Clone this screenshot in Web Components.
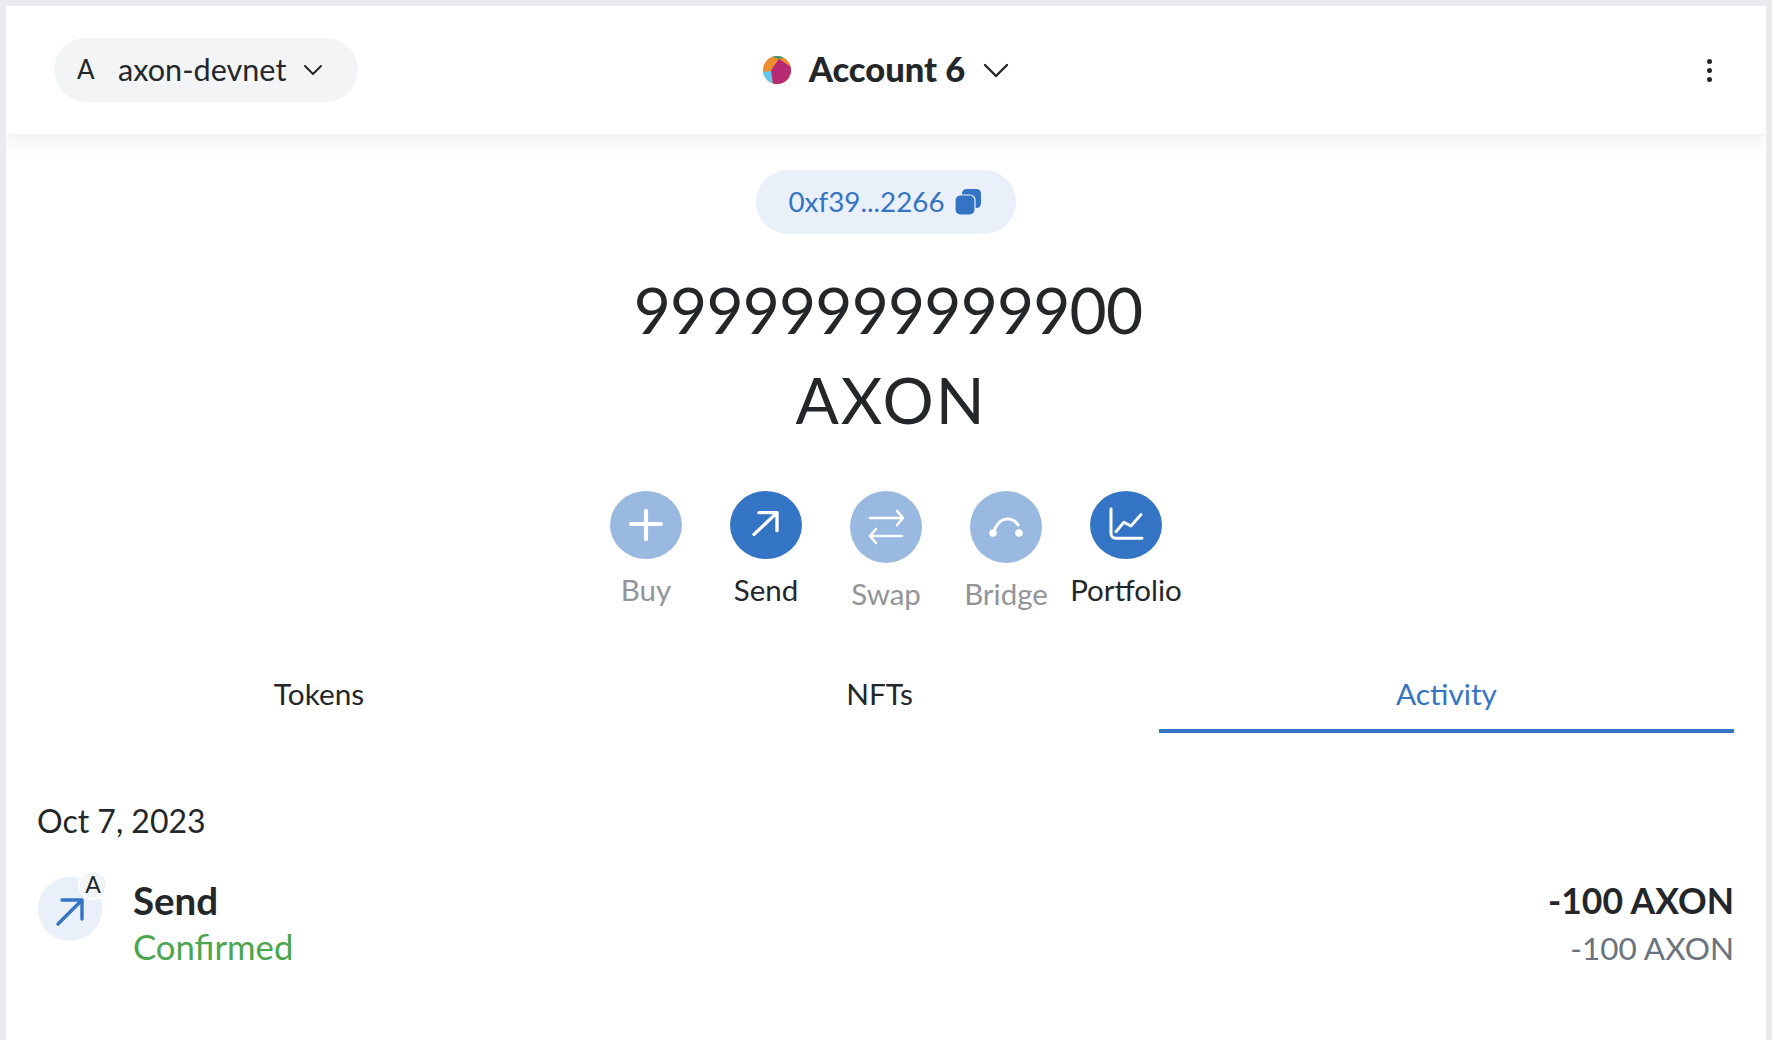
<!DOCTYPE html>
<html>
<head>
<meta charset="utf-8">
<title>axon-devnet</title>
<style>
  html, body {
    margin: 0;
    height: 100%;
    overflow: hidden;
  }
  body {
    background: #e9ebee;
    color: #24272a;
    font-family: Lato, "Liberation Sans", sans-serif;
  }
</style>
</head>
<body>
<wallet-page>
  <wallet-header slot="header"></wallet-header>
  <address-pill>0xf39...2266</address-pill>
  <token-balance amount="99999999999900" unit="AXON"></token-balance>
  <action-row>
    <action-button icon="plus" disabled short>Buy</action-button>
    <action-button icon="send" short>Send</action-button>
    <action-button icon="swap" disabled>Swap</action-button>
    <action-button icon="bridge" disabled>Bridge</action-button>
    <action-button icon="chart" short>Portfolio</action-button>
  </action-row>
  <tab-bar>
    <tab-item>Tokens</tab-item>
    <tab-item>NFTs</tab-item>
    <tab-item active>Activity</tab-item>
  </tab-bar>
  <activity-list date="Oct 7, 2023">
    <activity-item title="Send" status="Confirmed" primary="-100 AXON" secondary="-100 AXON"></activity-item>
  </activity-list>
</wallet-page>

<script>
const ICONS = {
  plus: '<path d="M36 21v30M21 35h30" stroke="#fff" stroke-width="4.2" stroke-linecap="round" fill="none"/>',
  send: '<path d="M24 46 L46 24 M29 23h18v19" stroke="#fff" stroke-width="3.4" stroke-linecap="round" stroke-linejoin="round" fill="none"/>',
  swap: '<path d="M20 27h33M47 20l6 7-6 7M52 45H20M26 38l-6 7 6 7" stroke="#fff" stroke-width="2.6" stroke-linecap="round" stroke-linejoin="round" fill="none"/>',
  bridge: '<path d="M25 38c3-7 7-10 12-10s9 2 11 6" stroke="#fff" stroke-width="3" stroke-linecap="round" fill="none"/><circle cx="23" cy="42" r="3.8" fill="#fff"/><circle cx="49" cy="42" r="3.8" fill="#fff"/>',
  chart: '<path d="M21 19v26c0 3 2 5 5 5h26" stroke="#fff" stroke-width="3" stroke-linecap="round" fill="none"/><path d="M26 43l8-10 7 4 10-12" stroke="#fff" stroke-width="3" stroke-linecap="round" stroke-linejoin="round" fill="none"/>'
};

class WalletPage extends HTMLElement {
  constructor() {
    super();
    this.attachShadow({mode: 'open'});
    this.shadowRoot.innerHTML = `
      <style>
        :host {
          display: block;
          margin: 6px 6px 0;
          height: 1034px;
          background: #fff;
          overflow: hidden;
        }
        main {
          display: flex;
          flex-direction: column;
          align-items: center;
          padding-top: 36px;
        }
      </style>
      <slot name="header"></slot>
      <main><slot></slot></main>
    `;
  }
}

class WalletHeader extends HTMLElement {
  constructor() {
    super();
    this.attachShadow({mode: 'open'});
    this.shadowRoot.innerHTML = `
      <style>
        :host {
          display: grid;
          grid-template-columns: 1fr auto 1fr;
          align-items: center;
          height: 128px;
          padding: 0 48px;
          box-sizing: border-box;
          background: #fff;
          box-shadow: 0 4px 24px rgba(0,0,0,.09);
          position: relative;
        }
        .net {
          justify-self: start;
          display: flex;
          align-items: center;
          width: 304px;
          height: 64px;
          box-sizing: border-box;
          padding-left: 23px;
          border-radius: 32px;
          background: #f2f4f6;
          font-size: 30.6px;
        }
        .net span { position: relative; top: -1px; }
        .net .letter { width: 41px; font-size: 26px; }
        .net svg { margin-left: 17px; }
        .acct {
          display: flex;
          align-items: center;
          font-size: 34.5px;
          font-weight: 900;
        }
        .acct span { position: relative; top: -2px; }
        .acct svg.ava { margin-right: 18px; }
        .acct svg.car { margin-left: 18px; }
        .dots {
          justify-self: end;
          display: flex;
          flex-direction: column;
          gap: 4px;
          margin-right: 6px;
        }
        .dots i {
          width: 5px;
          height: 5px;
          border-radius: 50%;
          background: #24272a;
        }
      </style>
      <div class="net">
        <span class="letter">A</span><span>axon-devnet</span>
        <svg width="20" height="12" viewBox="0 0 20 12"><path d="M2 2l8 8 8-8" stroke="#24272a" stroke-width="2" stroke-linecap="round" stroke-linejoin="round" fill="none"/></svg>
      </div>
      <div class="acct">
        <svg class="ava" width="28" height="28" viewBox="0 0 28 28">
          <clipPath id="c"><circle cx="14" cy="14" r="14"/></clipPath>
          <g clip-path="url(#c)">
            <rect width="28" height="28" fill="#ed8f30"/>
            <path d="M8 0h16l-8 3z" fill="#2e9b79"/>
            <path d="M0 16l8-1 2 13H0z" fill="#5fc8ef"/>
            <path d="M8 14 16 3l12 8v17H10z" fill="#b92a75"/>
          </g>
        </svg>
        <span>Account 6</span>
        <svg class="car" width="26" height="16" viewBox="0 0 26 16"><path d="M2 3l11 11L24 3" stroke="#24272a" stroke-width="2.4" stroke-linecap="round" stroke-linejoin="round" fill="none"/></svg>
      </div>
      <div class="dots"><i></i><i></i><i></i></div>
    `;
  }
}

class AddressPill extends HTMLElement {
  constructor() {
    super();
    this.attachShadow({mode: 'open'});
    this.shadowRoot.innerHTML = `
      <style>
        :host {
          display: flex;
          align-items: center;
          justify-content: center;
          gap: 10px;
          width: 260px;
          height: 64px;
          border-radius: 32px;
          background: #e9f0f9;
          color: #3474c4;
          font-size: 27.8px;
        }
        span { position: relative; top: -1px; }
        svg { margin-right: 3px; }
      </style>
      <span><slot></slot></span>
      <svg width="26" height="26" viewBox="0 0 26 26">
        <rect x="7" y="0" width="19" height="19" rx="4.5" fill="#3474c4"/>
        <rect x="0" y="6" width="20" height="20" rx="5" fill="#3474c4" stroke="#e9f0f9" stroke-width="1.2"/>
      </svg>
    `;
  }
}

class TokenBalance extends HTMLElement {
  constructor() {
    super();
    this.attachShadow({mode: 'open'});
    this.shadowRoot.innerHTML = `
      <style>
        :host {
          display: block;
          text-align: center;
          font-size: 64px;
          line-height: 90px;
          margin: 31px 0 46px;
        }
        div { white-space: nowrap; }
        .amount { letter-spacing: -0.8px; margin-left: 4px; }
        .unit { letter-spacing: 2px; margin-left: 10px; }
      </style>
      <div class="amount">${this.getAttribute('amount')}</div>
      <div class="unit">${this.getAttribute('unit')}</div>
    `;
  }
}

class ActionRow extends HTMLElement {
  constructor() {
    super();
    this.attachShadow({mode: 'open'});
    this.shadowRoot.innerHTML = `
      <style>
        :host {
          display: flex;
          gap: 48px;
          height: 173px;
          align-items: flex-start;
        }
      </style>
      <slot></slot>
    `;
  }
}

class ActionButton extends HTMLElement {
  constructor() {
    super();
    this.attachShadow({mode: 'open'});
    let icon = this.getAttribute('icon');
    this.shadowRoot.innerHTML = `
      <style>
        :host {
          display: flex;
          flex-direction: column;
          align-items: center;
          width: 72px;
          font-size: 29.5px;
          color: #24272a;
        }
        :host([disabled]) { color: #92949a; }
        .circle {
          width: 72px;
          height: 72px;
          border-radius: 50%;
          background: #3474c4;
          display: block;
          flex: none;
        }
        :host([disabled]) .circle { background: #99b9e1; }
        :host([short]) .circle { height: 68px; }
        .label {
          margin-top: 14px;
          white-space: nowrap;
          line-height: 34px;
        }
      </style>
      <svg class="circle" viewBox="0 0 72 72" preserveAspectRatio="none">${ICONS[icon]}</svg>
      <span class="label"><slot></slot></span>
    `;
  }
}

class TabBar extends HTMLElement {
  constructor() {
    super();
    this.attachShadow({mode: 'open'});
    this.shadowRoot.innerHTML = `
      <style>
        :host {
          display: grid;
          grid-template-columns: 562fr 559fr 575fr;
          align-self: stretch;
          margin: 0 32px;
        }
      </style>
      <slot></slot>
    `;
  }
}

class TabItem extends HTMLElement {
  constructor() {
    super();
    this.attachShadow({mode: 'open'});
    this.shadowRoot.innerHTML = `
      <style>
        :host {
          display: block;
          height: 69px;
          line-height: 60px;
          text-align: center;
          font-size: 29.8px;
          box-sizing: border-box;
          color: #24272a;
        }
        :host([active]) {
          color: #3474c4;
          border-bottom: 4px solid #3474c4;
        }
      </style>
      <slot></slot>
    `;
  }
}

class ActivityList extends HTMLElement {
  constructor() {
    super();
    this.attachShadow({mode: 'open'});
    this.shadowRoot.innerHTML = `
      <style>
        :host {
          display: block;
          align-self: stretch;
          padding: 0 32px;
        }
        .date {
          font-size: 32px;
          line-height: 40px;
          margin: 68px 0 36px -1px;
        }
      </style>
      <div class="date">${this.getAttribute('date')}</div>
      <slot></slot>
    `;
  }
}

class ActivityItem extends HTMLElement {
  constructor() {
    super();
    this.attachShadow({mode: 'open'});
    this.shadowRoot.innerHTML = `
      <style>
        :host {
          display: flex;
          align-items: flex-start;
        }
        .icon {
          position: relative;
          width: 64px;
          height: 64px;
          border-radius: 50%;
          background: #e9f0f9;
          flex: none;
          margin-right: 31px;
        }
        .icon svg { display: block; }
        .badge {
          position: absolute;
          top: -7px;
          right: -6px;
          width: 30px;
          height: 30px;
          border-radius: 50%;
          background: #f2f4f6;
          border: 2px solid #fff;
          box-sizing: border-box;
          text-align: center;
          font-size: 23px;
          line-height: 24px;
        }
        .grow { flex: 1; }
        .title { font-size: 38.5px; font-weight: 700; line-height: 46px; }
        .status { font-size: 34.7px; color: #4da54f; line-height: 48px; }
        .right { text-align: right; }
        .primary { font-size: 35.5px; font-weight: 700; line-height: 48px; }
        .secondary { font-size: 31.5px; color: #6a737d; line-height: 46px; }
      </style>
      <div class="icon">
        <svg width="64" height="64" viewBox="0 0 64 64"><path d="M20 47 L43 24 M24 23h20v19" stroke="#3474c4" stroke-width="3.4" stroke-linecap="round" stroke-linejoin="round" fill="none"/></svg>
        <span class="badge">A</span>
      </div>
      <div class="grow">
        <div class="title">${this.getAttribute('title')}</div>
        <div class="status">${this.getAttribute('status')}</div>
      </div>
      <div class="right">
        <div class="primary">${this.getAttribute('primary')}</div>
        <div class="secondary">${this.getAttribute('secondary')}</div>
      </div>
    `;
  }
}

customElements.define('wallet-page', WalletPage);
customElements.define('wallet-header', WalletHeader);
customElements.define('address-pill', AddressPill);
customElements.define('token-balance', TokenBalance);
customElements.define('action-row', ActionRow);
customElements.define('action-button', ActionButton);
customElements.define('tab-bar', TabBar);
customElements.define('tab-item', TabItem);
customElements.define('activity-list', ActivityList);
customElements.define('activity-item', ActivityItem);
</script>
</body>
</html>
